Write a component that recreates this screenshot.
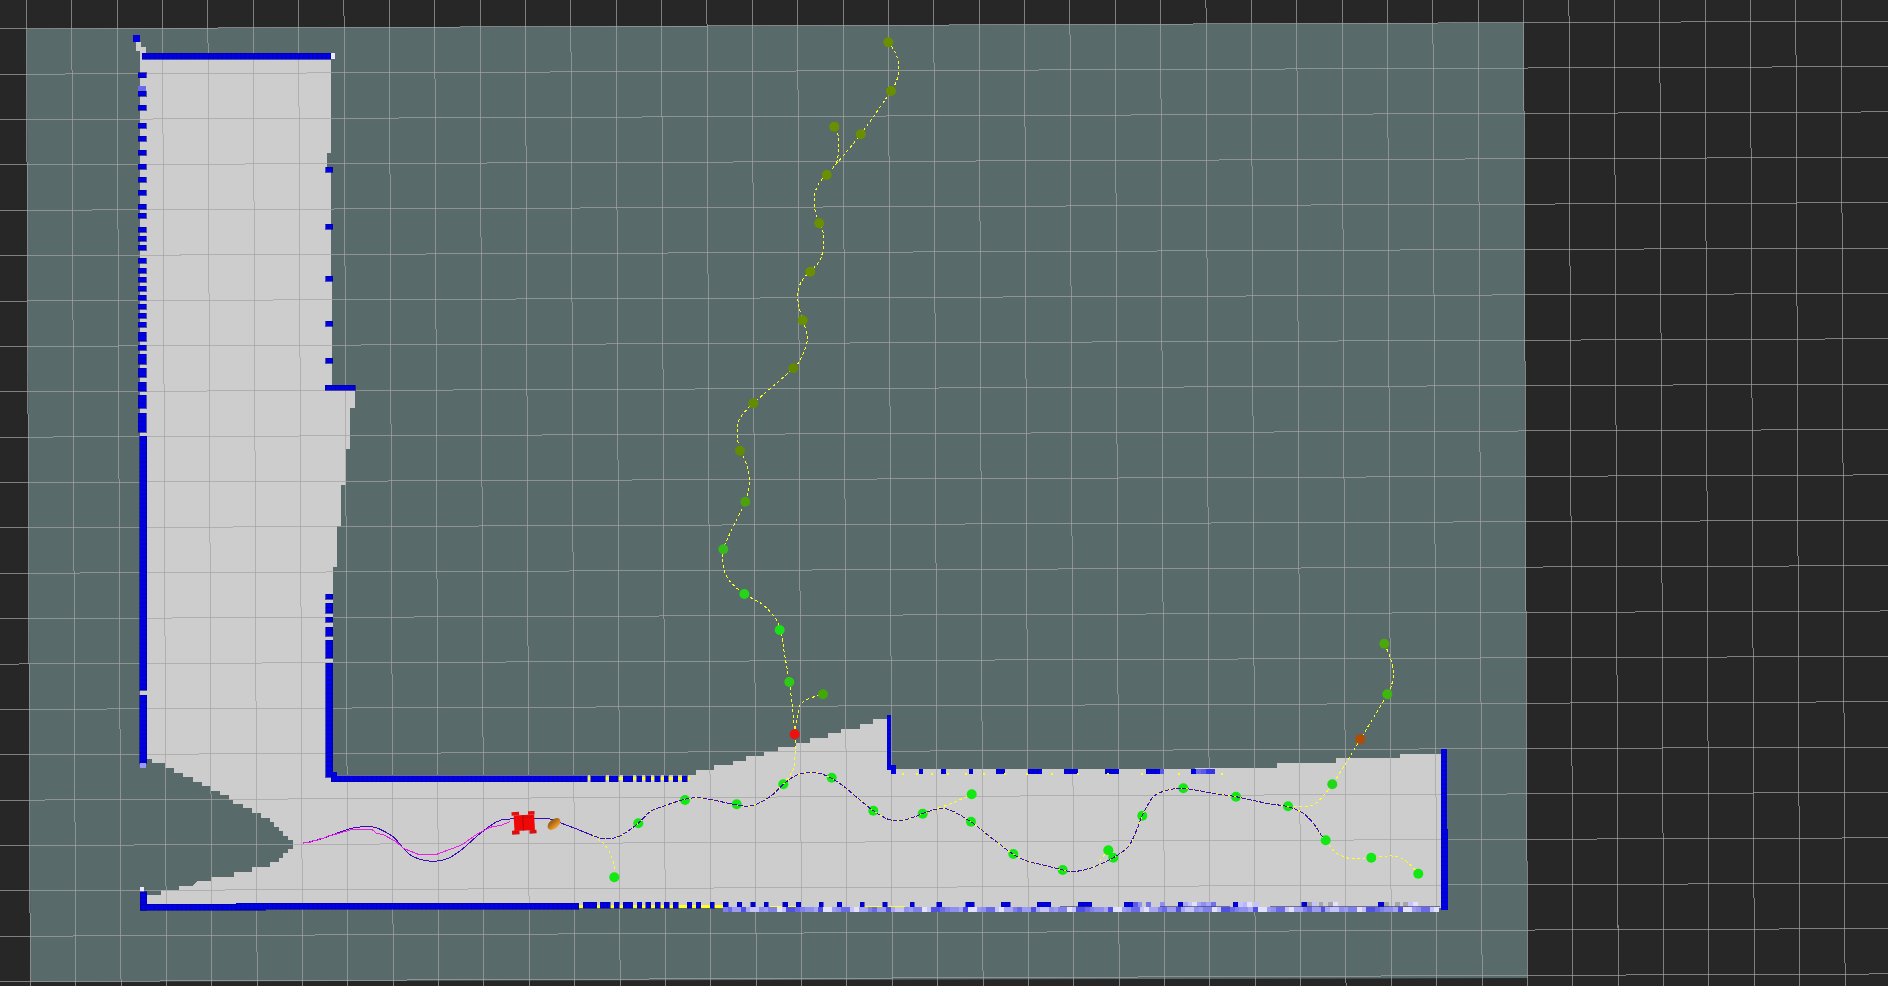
type Pt = [number, number];

const CELL = 4.53;
const GRID = 45.37;

const free: Pt[] = [
  [140, 53], [331, 53], [331, 153], [327, 153], [327, 168], [331, 168], [332, 387], [355, 387], [355, 408], [350, 408],
  [350, 449], [346, 449], [346, 485], [341, 485], [341, 526], [337, 526], [337, 567], [333, 567], [333, 775], [696, 775],
  [696, 770], [714, 770], [714, 765], [732.7, 765], [732.7, 761], [746, 761], [746, 756], [764, 756], [764, 751.7],
  [778.3, 751.7], [778.3, 747.3], [796, 747.3], [796, 742.7], [810, 742.7], [810, 738.3], [828.3, 738.3], [828.3, 733.3],
  [841, 733.3], [841, 729.3], [860, 729.3], [860, 724], [873.3, 724], [873.3, 719.3], [887.3, 719.3], [887.3, 769.3],
  [1276.7, 768.3], [1276.7, 763.3], [1336, 763.3], [1336, 758.3], [1400, 758.3], [1400, 754], [1441, 754], [1441, 908],
  [146.7, 908], [146.7, 895], [160.7, 895], [160.7, 890], [179, 890], [179, 885.7], [192.7, 885.7], [197.3, 881],
  [210.7, 881], [210.7, 876.7], [234, 876.7], [234, 871.7], [251.7, 871.7], [251.7, 866.7], [270, 866.7], [270, 862.3],
  [279, 862.3], [279, 857.7], [283.3, 857.7], [283.3, 853.3], [288.3, 853.3], [288.3, 849], [292.7, 849], [292.7, 840],
  [288.3, 840], [288.3, 835.7], [283.3, 835.7], [283.3, 831], [279, 831], [279, 826.7], [274.3, 826.7], [274.3, 822.3],
  [270, 822.3], [270, 817.7], [260.7, 817.7], [260.7, 813.3], [251.7, 813.3], [251.7, 808.3], [242.7, 808.3],
  [242.7, 804.3], [233.3, 804.3], [233.3, 800], [229, 800], [229, 795], [220, 795], [220, 790.7], [210.7, 790.7],
  [210.7, 786], [201.7, 786], [201.7, 781.7], [192.7, 781.7], [192.7, 776.7], [183.3, 776.7], [183.3, 772.7],
  [174, 772.7], [174, 768.3], [165, 768.3], [165, 763.3], [151.7, 763.3], [151.7, 759], [140, 759],
];

// y ranges of the wall pieces down the left side
const leftDots: Pt[] = [
  [72.5, 77.5], [91, 96], [105, 110], [123, 128], [136, 141], [150, 155], [164, 169], [177, 182], [190, 195],
  [204, 209], [213, 218], [227, 232], [236, 241], [245, 250], [258, 263], [268, 273], [277, 282], [286, 291], [295, 300],
  [304, 309], [313, 318], [322, 327], [332, 341], [345, 350], [354, 364], [368, 377], [382, 391], [395, 408], [413, 432],
  [436, 690], [695, 763],
];
const rightDots: Pt[] = [[167, 172], [224, 229], [276, 281], [321, 326], [358, 363], [594, 599], [603, 613], [617, 622], [627, 636], [640, 658], [663, 777]];

const upperDashes: Pt[] = [
  [331, 587], [590.7, 605], [609.3, 618.3], [623.3, 632.7], [636.7, 641.7], [645.7, 650.7], [654.7, 660], [664, 668.3],
  [673.3, 677.7], [682.3, 687.3],
];
const farDashes: Pt[] = [
  [919, 922.7], [941, 946], [969, 972.7], [996, 1005], [1028, 1041.7], [1064, 1077.7], [1105, 1119], [1146, 1160], [1191, 1196],
];
const lowerDashes: Pt[] = [
  [583.3, 596.7], [600, 610], [614, 619.3], [623.3, 632.7], [637.3, 641.7], [645.7, 650.7], [655, 660], [664, 669.3],
  [673.3, 678.3], [687.3, 691.7], [696, 700.7], [710, 714.3], [723.3, 728.3], [737.3, 741.7], [750.7, 755], [764, 768.3],
  [782.7, 787.7], [796, 800.7], [819.3, 823.3], [837.3, 841.7], [860, 864.3], [882.7, 887.3], [910, 914.3], [936.7, 941.7],
  [965.7, 974], [1001, 1010], [1037.3, 1050.7], [1078.3, 1091.7], [1124, 1133], [1178.3, 1183], [1233.3, 1238], [1301.7, 1307], [1378, 1384],
];
const yellowTicks = [903, 916.7, 931.7, 948.3, 965.7, 984, 1005, 1027.3, 1051.7, 1078.3, 1108.3, 1141.7, 1179.3, 1221.7];

const fadeCells: [number, number, string][] = [
  [1133, 4.5, "#5a5ae6"], [1137.5, 4.5, "#8f8ff0"], [1146, 5, "#7070ea"], [1160, 4.5, "#8f8ff0"], [1196, 5, "#a6a6f5"],
  [1201, 5, "#8f8ff0"], [1206, 4.5, "#a6a6f5"], [1211, 4.5, "#7070ea"], [1183, 4.5, "#a8a8f5"], [1187.5, 4.5, "#c4c4fa"],
  [1192, 4.5, "#e2e2fd"], [1238, 4.5, "#c4c4fa"], [1242.5, 4.5, "#b8b8f8"], [1247, 4.5, "#e2e2fd"], [1254, 4.5, "#c4c4fa"],
  [1307, 4.5, "#9c9cab"], [1312, 5, "#c4c4fa"], [1319, 4, "#a4a4ac"], [1328, 4.5, "#a4a4ac"], [1333, 4.5, "#e2e2fd"],
  [1384, 4.5, "#a4a4ac"], [1395, 4.5, "#a4a4ac"], [1403, 4.5, "#a4a4ac"], [1408, 4.5, "#c4c4fa"], [1413, 4.5, "#e2e2fd"],
];

const stripColors = ["#8080ea", "#a6a6f5", "#8f8ff0", "#c4c4fa", "#6a6ae8", "#5050e2", "#9c9cf2", "#e2e2fd"];

const purple: Pt[] = [
  [302.7, 843.3], [320, 839.3], [336.7, 833.3], [351.7, 828.3], [363.3, 826.7], [375, 827.3], [386.7, 832.7], [395, 838.3],
  [403.3, 848.3], [413.3, 856.7], [431.7, 861.3], [448.3, 858.3], [463.3, 848.3], [478.3, 835], [496.7, 821.7], [510, 819],
  [536.7, 818.7], [550, 819], [560, 822.7], [576.7, 829], [593.3, 835.7], [606, 839], [620, 836], [638.3, 823.3], [650, 811.7],
  [666.7, 805], [685, 799.3], [696.7, 797.7], [713.3, 800], [736.7, 805], [751.7, 805.7], [770, 796.7], [783.3, 784.3],
  [796.7, 775], [811.7, 772.3], [821.7, 774], [831.7, 778.3], [843.3, 786], [860, 800], [873.3, 810.7], [888.3, 819.3],
  [900, 820.7], [913.3, 817.3], [923.3, 813.3], [938.3, 808.7], [950, 810], [971.7, 822.3], [990, 836.7], [1013.3, 854.3],
  [1026.7, 861], [1040, 864.3], [1062.7, 870], [1073.3, 871.7], [1090, 868.3], [1113.3, 857.7], [1128.3, 846.7], [1136.7, 830],
  [1142.3, 815.7], [1153.3, 796.7], [1168.3, 790], [1183.3, 788.3], [1213.3, 793.3], [1236, 796.7], [1266.7, 803.3],
  [1288.3, 806.7], [1303.3, 813.3], [1313.3, 823.3], [1323.3, 838.3],
];

const magenta: Pt[] = [
  [302.7, 843.3], [306, 842], [309, 843], [313, 840.5], [317, 841], [320, 838.5], [324, 838], [328, 836], [333, 835], [340, 833],
  [350, 830], [357, 829], [368.3, 829], [372, 829.5], [376.7, 833.3], [383, 834.5], [390, 838.3], [396, 841.5], [403.3, 848.3],
  [413.3, 852.3], [418.3, 854.3], [421.7, 855], [425, 854], [428, 855], [431.7, 854], [436.7, 854.3], [443, 852], [450, 849.3],
  [454, 848], [463.3, 844], [470, 839], [478.3, 833.3], [490, 827.3], [501.7, 825], [510, 821.7],
];

const yellowDashed: Pt[][] = [
  [[593, 835.7], [603.3, 843.3], [610, 853.3], [614.3, 866.7], [614.3, 877.3]],
  [[923, 813], [935, 809], [950, 804], [971.7, 794.3]],
  [[794.7, 734.3], [796, 723], [797.7, 715], [800, 705], [808, 699], [823, 694.3]],
  [[783.3, 784.3], [793, 770], [795.3, 750], [794.7, 734.3]],
  [[1108.3, 850.3], [1098, 863]],
  [[1288.3, 806.7], [1303.3, 806.7], [1316.7, 802.7], [1332.3, 784.3], [1346.7, 761.7], [1360.3, 739.3], [1387.3, 694.3], [1392.7, 680], [1393.3, 670], [1390, 656.7], [1384.3, 643.7]],
  [[1325.7, 840.3], [1335, 851.7], [1345, 857.3], [1356.7, 859], [1371.3, 857.7], [1391.7, 856], [1401.7, 858.3], [1411.7, 866], [1418.3, 873.7]],
  [[794.7, 734.3], [792.7, 710], [789.3, 682], [785, 656.7], [781.7, 636.7], [779.7, 630], [776.7, 620], [770, 611.7], [760, 602.7], [744.3, 594], [731.7, 583.3], [725, 573.3], [722.7, 560], [723.3, 549.3], [730, 533.3], [745.3, 501.7], [749.3, 483.3], [748.3, 470], [743.3, 456.7], [740, 450.7], [737.3, 436.7], [738.3, 421.7], [745, 411.7], [753.3, 403.3], [793.3, 368.3], [801.7, 356.7], [806.7, 343.3], [806.7, 333.3], [802.7, 320.3], [798.3, 303.3], [798.3, 290], [803.3, 278.3], [810.3, 271.7], [820, 260], [823.3, 246.7], [823.3, 233.3], [819.3, 223.3], [815, 210], [815, 193.3], [820, 181.7], [826.7, 175], [836.7, 163.3], [860.7, 134.3], [891, 91], [897.7, 76.7], [898.3, 63.3], [895, 51.7], [888.3, 42.3]],
  [[836.7, 163.3], [839, 146.7], [837.3, 131.7], [834.3, 126.7]],
];

const spheres: [number, number, string][] = [
  [614.3, 877.3, "#12e812"], [638.3, 823.3, "#12e812"], [685, 800, "#12e812"], [736.7, 804.3, "#12e812"], [783.3, 784.3, "#12e812"],
  [831.7, 777.7, "#12e812"], [873.3, 810.7, "#12e812"], [922.7, 813.7, "#12e812"], [971.7, 794.3, "#12e812"], [971, 821.7, "#12e812"],
  [1013.3, 854, "#12e812"], [1062.7, 870, "#12e812"], [1113.3, 857.7, "#12e812"], [1108.3, 850.3, "#12e812"], [1142.3, 815.7, "#12e812"],
  [1183.3, 788.3, "#12e812"], [1236, 796.7, "#12e812"], [1288, 806.3, "#12e812"], [1325.7, 840.3, "#12e812"], [1371.3, 857.7, "#12e812"],
  [1418.3, 873.7, "#12e812"], [1332.3, 784.3, "#22d816"], [1387.3, 694.3, "#3db80c"], [1384.3, 643.7, "#4aa80a"], [1360.3, 739.3, "#b04c06"],
  [794.7, 734.3, "#f01010"], [789.3, 682, "#2ecb16"], [823, 694.3, "#42a808"], [779.7, 630, "#1ae018"], [744.3, 594, "#26d41a"],
  [723.3, 549.3, "#35bb1c"], [745.3, 501.7, "#4fa010"], [740, 450.7, "#648c00"], [753.3, 403.3, "#648c00"], [793.3, 368.3, "#648800"],
  [802.7, 320.3, "#6a9000"], [810.3, 271.7, "#6a9000"], [819.3, 223.3, "#6a9000"], [826.7, 175, "#6a9000"], [834.3, 126.7, "#6a9000"],
  [860.7, 134.3, "#6a9000"], [891, 91, "#6a9000"], [888.3, 42.3, "#6a9000"],
];

// catmull-rom through the points
const smooth = (p: Pt[]) => {
  let d = `M${p[0][0]} ${p[0][1]}`;
  for (let i = 0; i < p.length - 1; i++) {
    const a = p[i - 1] ?? p[i];
    const b = p[i];
    const c = p[i + 1];
    const e = p[i + 2] ?? c;
    d += `C${b[0] + (c[0] - a[0]) / 6} ${b[1] + (c[1] - a[1]) / 6} ${c[0] - (e[0] - b[0]) / 6} ${c[1] - (e[1] - b[1]) / 6} ${c[0]} ${c[1]}`;
  }
  return d;
};

const poly = (p: Pt[]) => p.map((q) => q.join(",")).join(" ");

const Grid = () => (
  <g stroke="#a4a4a4" strokeOpacity={0.71} strokeWidth={1} shapeRendering="crispEdges">
    {Array.from({ length: 42 }, (_, i) => {
      const x = 117.3 + (i - 3) * GRID;
      return <line key={i} x1={x - 0.2} y1={0} x2={x + 3.74} y2={986} />;
    })}
    {Array.from({ length: 22 }, (_, i) => {
      const y = 28.9 + i * GRID;
      return <line key={i} x1={0} y1={y} x2={1888} y2={y - 7.74} />;
    })}
  </g>
);

const WallV = ({ x, w, y1, y2 }: { x: number; w: number; y1: number; y2: number }) => (
  <rect x={x} y={y1} width={w} height={y2 - y1} fill="url(#wallV)" stroke="#00009a" strokeWidth={0.6} />
);

const WallH = ({ x1, x2, y, h }: { x1: number; x2: number; y: number; h: number }) => (
  <rect x={x1} y={y} width={x2 - x1} height={h} fill="url(#wallH)" stroke="#00009a" strokeWidth={0.6} />
);

const Walls = () => (
  <g shapeRendering="crispEdges">
    <rect x={136} y={42} width={5} height={9} fill="#cdcdcd" />
    <rect x={140} y={47} width={6} height={7} fill="#cdcdcd" />
    <rect x={133} y={35} width={7} height={7} fill="#0000e0" />
    <WallH x1={142} x2={330.5} y={53} h={6} />
    <rect x={330.5} y={53} width={4.5} height={6} fill="#e8e8ff" />
    <rect x={138} y={86} width={8} height={5} fill="#6a6ae8" />
    {leftDots.map(([a, b]) => (
      <WallV key={a} x={a > 430 ? 139.5 : 138} w={a > 430 ? 7 : 8} y1={a} y2={b} />
    ))}
    <rect x={140} y={763} width={6} height={5} fill="#9a9af5" />
    {rightDots.map(([a, b]) => (
      <WallV key={a} x={325.5} w={7} y1={a} y2={b} />
    ))}
    <rect x={326} y={772} width={11} height={5} fill="#0000e0" />
    <WallH x1={325} x2={355} y={385} h={5} />

    <rect x={587.5} y={776.5} width={102} height={3.5} fill="#ffff20" />
    {upperDashes.map(([a, b]) => (
      <rect key={a} x={a} y={775.5} width={b - a} height={6} fill="url(#wallH)" stroke="#00009a" strokeWidth={0.5} />
    ))}

    <rect x={887.3} y={715} width={4} height={55} fill="url(#wallV)" />
    <rect x={891} y={765} width={4.7} height={9.3} fill="#0000e0" />
    {farDashes.map(([a, b]) => (
      <rect key={a} x={a} y={769.3} width={b - a} height={5} fill="url(#wallH)" />
    ))}
    <rect x={1160} y={769.3} width={4.3} height={5} fill="#5a5ae6" />
    <rect x={1196} y={769.3} width={5} height={5} fill="#6a6ae8" />
    <rect x={1201} y={769.3} width={5} height={5} fill="#5a5ae6" />
    <rect x={1206} y={769.3} width={9} height={5} fill="#3636e6" />
    {yellowTicks.map((x) => (
      <rect key={x} x={x - 1} y={773} width={2} height={2} fill="#ffff20" />
    ))}

    <rect x={1441} y={749.3} width={6.3} height={160.5} fill="url(#wallV)" />
    <rect x={1441.5} y={829} width={6.7} height={80.5} fill="url(#wallV)" />

    <rect x={578} y={904.5} width={145} height={3} fill="#ffff20" />
    <rect x={770} y={905.5} width={30} height={2} fill="#ffff20" />
    <rect x={860} y={905.5} width={45} height={2} fill="#ffff20" />

    <rect x={140} y={887} width={4} height={5} fill="#e8e8ff" />
    <WallV x={140} w={6.5} y1={891.7} y2={910} />
    <WallH x1={140} x2={265} y={904} h={6} />
    <WallH x1={236} x2={578.5} y={903} h={6} />
    {lowerDashes.map(([a, b]) => (
      <rect key={a} x={a} y={902} width={b - a} height={6} fill="url(#wallH)" stroke="#00009a" strokeWidth={0.5} />
    ))}
    {Array.from({ length: 158 }, (_, i) => (
      <rect
        key={i}
        x={723 + i * CELL}
        y={906.7}
        width={CELL}
        height={5}
        fill={stripColors[(i * i * 7 + i * 13 + (i >> 2)) % 8]}
      />
    ))}
    {fadeCells.map(([x, w, c]) => (
      <rect key={x} x={x} y={902} width={w} height={5} fill={c} />
    ))}
    <rect x={1060} y={906} width={32} height={1} fill="#30306a" opacity={0.6} />
    <rect x={1160} y={906} width={70} height={1} fill="#30306a" opacity={0.6} />
    <rect x={1270} y={906} width={170} height={1} fill="#30306a" opacity={0.6} />
  </g>
);

const Robot = () => (
  <g>
    <g transform="rotate(-3 524 822)">
      <rect x={512} y={811.5} width={7.5} height={3.5} fill="#e01010" />
      <rect x={528.5} y={811.5} width={6.5} height={3.5} fill="#e01010" />
      <rect x={511.5} y={830} width={7.5} height={4} fill="#d80f0f" />
      <rect x={529} y={830.5} width={7} height={3.5} fill="#d80f0f" />
      <rect x={514} y={815} width={20.5} height={15.5} fill="#f00808" />
      <rect x={522.5} y={815} width={1.2} height={15.5} fill="#b80808" />
      <rect x={524} y={817} width={8} height={1} fill="#c80c0c" />
    </g>
    <g transform="rotate(-40 554 824)">
      <ellipse cx={554} cy={824} rx={7.5} ry={4.5} fill="url(#capsule)" />
    </g>
  </g>
);

export default function App() {
  return (
    <div className="w-full h-screen overflow-hidden bg-[#272727]">
      <svg className="block w-full h-full" viewBox="0 0 1888 986">
        <defs>
          <pattern id="wallV" width={CELL} height={CELL} patternUnits="userSpaceOnUse">
            <rect width={CELL} height={CELL} fill="#0000e6" />
            <rect width={CELL} height={0.8} fill="#0000a8" />
          </pattern>
          <pattern id="wallH" width={CELL} height={CELL} patternUnits="userSpaceOnUse">
            <rect width={CELL} height={CELL} fill="#0000e6" />
            <rect width={0.8} height={CELL} fill="#0000a8" />
          </pattern>
          <linearGradient id="capsule" x1="0" y1="0" x2="0" y2="1">
            <stop offset="0" stopColor="#8a5a14" />
            <stop offset="0.5" stopColor="#c87a1c" />
            <stop offset="1" stopColor="#f2a63a" />
          </linearGradient>
        </defs>

        <polygon points="26.7,28.8 1523.8,22.7 1527.5,978 30.4,981.8" fill="#586a6a" />
        <polygon points={poly(free)} fill="#cdcdcd" shapeRendering="crispEdges" />
        <Grid />
        <Walls />

        {yellowDashed.map((p, i) => (
          <path
            key={i}
            d={smooth(p)}
            fill="none"
            stroke="#ffff20"
            strokeWidth={1}
            strokeDasharray="3 2.5"
            shapeRendering="crispEdges"
          />
        ))}
        {spheres.map(([x, y, c]) => (
          <circle key={`${x}-${y}`} cx={x} cy={y} r={5} fill={c} />
        ))}

        <path d={smooth(purple)} fill="none" stroke="#3c0cb0" strokeWidth={1} shapeRendering="crispEdges" />
        <polyline points={poly(magenta)} fill="none" stroke="#ea1eea" strokeWidth={1} shapeRendering="crispEdges" />
        <path
          d={smooth(purple.slice(20))}
          fill="none"
          stroke="#ffff20"
          strokeWidth={1}
          strokeDasharray="1.5 4.5"
          shapeRendering="crispEdges"
        />
        <Robot />
      </svg>
    </div>
  );
}
